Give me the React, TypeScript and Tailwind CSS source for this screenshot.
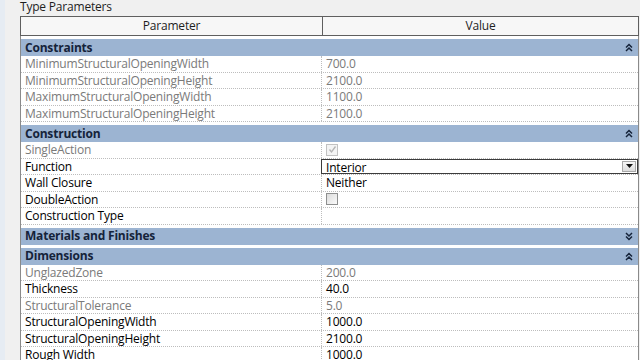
import { useState } from "react"

type Row = {
  name: string
  value?: string
  readOnly?: boolean
  kind?: "text" | "check" | "select"
  checked?: boolean
}

type Group = {
  title: string
  open: boolean
  rows: Row[]
}

const groups: Group[] = [
  {
    title: "Constraints",
    open: true,
    rows: [
      { name: "MinimumStructuralOpeningWidth", value: "700.0", readOnly: true },
      { name: "MinimumStructuralOpeningHeight", value: "2100.0", readOnly: true },
      { name: "MaximumStructuralOpeningWidth", value: "1100.0", readOnly: true },
      { name: "MaximumStructuralOpeningHeight", value: "2100.0", readOnly: true },
    ],
  },
  {
    title: "Construction",
    open: true,
    rows: [
      { name: "SingleAction", readOnly: true, kind: "check", checked: true },
      { name: "Function", value: "Interior", kind: "select" },
      { name: "Wall Closure", value: "Neither" },
      { name: "DoubleAction", kind: "check", checked: false },
      { name: "Construction Type", value: "" },
    ],
  },
  { title: "Materials and Finishes", open: false, rows: [] },
  {
    title: "Dimensions",
    open: true,
    rows: [
      { name: "UnglazedZone", value: "200.0", readOnly: true },
      { name: "Thickness", value: "40.0" },
      { name: "StructuralTolerance", value: "5.0", readOnly: true },
      { name: "StructuralOpeningWidth", value: "1000.0" },
      { name: "StructuralOpeningHeight", value: "2100.0" },
      { name: "Rough Width", value: "1000.0" },
    ],
  },
]

function Chevrons({ up }: { up: boolean }) {
  return (
    <svg width="8" height="9" viewBox="0 0 8 9" className="text-[#15233a]">
      {up ? (
        <path d="M1 4.5 L4 1.5 L7 4.5 M1 8 L4 5 L7 8" fill="none" stroke="currentColor" strokeWidth="1.5" />
      ) : (
        <path d="M1 1 L4 4 L7 1 M1 4.5 L4 7.5 L7 4.5" fill="none" stroke="currentColor" strokeWidth="1.5" />
      )}
    </svg>
  )
}

function CheckBox({ checked, disabled }: { checked: boolean; disabled?: boolean }) {
  return (
    <div
      className={`w-[12px] h-[12px] border flex items-center justify-center ${
        disabled ? "border-[#c2c2c2] bg-[#f4f4f4]" : "border-[#8e8f8f] bg-gradient-to-br from-[#dcdcdc] to-[#fbfbfb]"
      }`}
    >
      {checked && (
        <svg width="9" height="9" viewBox="0 0 9 9">
          <path d="M1.5 4.5 L3.5 7 L7.5 1.5" fill="none" stroke={disabled ? "#b5b5b5" : "#333"} strokeWidth="1.3" />
        </svg>
      )}
    </div>
  )
}

function ValueCell({ row }: { row: Row }) {
  if (row.kind === "check") {
    return (
      <div className="flex-1 flex items-center pl-[4px]">
        <CheckBox checked={!!row.checked} disabled={row.readOnly} />
      </div>
    )
  }
  if (row.kind === "select") {
    return (
      <div className="flex-1 flex items-stretch border border-[#3c3c3c] -ml-px bg-white">
        <span className="flex-1 pl-[4px] text-black leading-[15px]">{row.value}</span>
        <div className="w-[14px] my-px mr-px flex items-center justify-center bg-gradient-to-b from-[#f6f6f6] to-[#dcdcdc] border border-[#a8a8a8]">
          <svg width="7" height="4" viewBox="0 0 7 4">
            <path d="M0 0 L7 0 L3.5 4 Z" fill="#111" />
          </svg>
        </div>
      </div>
    )
  }
  return (
    <div className={`flex-1 pl-[4px] truncate ${row.readOnly ? "text-[#7a7a7a]" : "text-black"}`}>{row.value}</div>
  )
}

export default function App() {
  const [open, setOpen] = useState<Record<string, boolean>>(
    Object.fromEntries(groups.map((g) => [g.title, g.open])),
  )

  return (
    <div
      className="w-[640px] h-[360px] overflow-hidden bg-[#f0f0f0] text-[12px] tracking-[-0.2px] flex items-start"
      style={{ fontFamily: '"Open Sans", "Noto Sans", sans-serif' }}
    >
      <div className="w-[5px] h-full shrink-0 bg-[#e6ecf3]" />
      <div className="flex-1 flex flex-col">
        <div className="h-[16px] shrink-0 pl-[15px] leading-[14px] text-[#1e1e1e]">Type Parameters</div>

        <div className="ml-[15px] mr-[1px] shrink-0 flex flex-col bg-white border-l border-r border-[#8a8a8a]">
          {/* column headers */}
          <div className="h-[20px] shrink-0 flex border border-[#5f5f5f] -mx-px bg-[#f7f7f7] text-[#1e1e1e]">
            <div className="w-[302px] border-r border-[#5f5f5f] flex items-center justify-center">Parameter</div>
            <div className="flex-1 flex items-center justify-center">Value</div>
          </div>

          {groups.map((g) => (
            <div key={g.title} className="flex flex-col shrink-0">
              <button
                onClick={() => setOpen((o) => ({ ...o, [g.title]: !o[g.title] }))}
                className="mt-[3px] h-[17px] shrink-0 flex items-center justify-between pl-[4px] pr-[5px] bg-[#9cb4d2] text-[#15233a] font-bold text-left"
              >
                <span>{g.title}</span>
                <Chevrons up={open[g.title]} />
              </button>
              {open[g.title] &&
                g.rows.map((r) => (
                  <div
                    key={r.name}
                    className="h-[16.5px] shrink-0 flex border-b border-dotted border-[#bdbdbd] leading-[15px]"
                  >
                    <div
                      className={`w-[301px] pl-[4px] border-r border-dotted border-[#bdbdbd] truncate ${
                        r.readOnly ? "text-[#7a7a7a]" : "text-black"
                      }`}
                    >
                      {r.name}
                    </div>
                    <ValueCell row={r} />
                  </div>
                ))}
            </div>
          ))}
        </div>
      </div>
    </div>
  )
}
